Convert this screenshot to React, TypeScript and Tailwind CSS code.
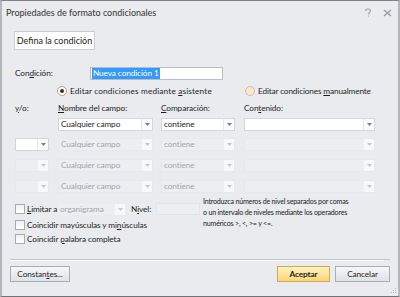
import React from "react";

const font = { fontFamily: "Lato, 'Liberation Sans', sans-serif" };

function Arrow({ disabled }: { disabled?: boolean }) {
  return (
    <div
      className={`flex h-full w-[11px] items-center justify-center border-l ${
        disabled ? "border-[#eceef1] bg-[#f7f8f9]" : "border-[#e4e6e9] bg-[#fbfbfc]"
      }`}
    >
      <svg width="5" height="3" viewBox="0 0 5 3">
        <path d="M0 0h5L2.5 3z" fill={disabled ? "#c4c7cc" : "#7a7f86"} />
      </svg>
    </div>
  );
}

function Drop({
  w,
  text,
  disabled,
}: {
  w: string;
  text?: string;
  disabled?: boolean;
}) {
  return (
    <div
      className={`flex h-[13px] items-center border ${w} ${
        disabled
          ? "border-[#e6e8eb] bg-[#eceef1] text-[#a3a6ab]"
          : "border-[#d3d6db] bg-white text-[#1e1e1e]"
      }`}
    >
      <div className="flex-1 truncate pl-[2px] leading-none">{text}</div>
      <Arrow disabled={disabled} />
    </div>
  );
}

function Check({ children }: { children: React.ReactNode }) {
  return (
    <div className="flex h-[14px] items-center gap-[2px] whitespace-nowrap">
      <div className="h-[10px] w-[10px] shrink-0 border border-[#a5abb3] bg-gradient-to-b from-[#f0f1f3] to-white" />
      <span>{children}</span>
    </div>
  );
}

function Row({ first }: { first?: boolean }) {
  return (
    <div className="flex h-[21px] items-center">
      <div className="w-[43px]">
        <div
          className={`flex h-[13px] w-[34px] items-center border ${
            first ? "border-[#d3d6db] bg-white" : "border-[#e6e8eb] bg-[#eceef1]"
          }`}
        >
          <div className="flex-1" />
          <Arrow disabled={!first} />
        </div>
      </div>
      <Drop w="w-[95px]" text="Cualquier campo" disabled />
      <div className="w-[8px]" />
      <Drop w="w-[74px]" text="contiene" disabled />
      <div className="w-[9px]" />
      <Drop w="w-[131px]" disabled />
    </div>
  );
}

export default function App() {
  return (
    <div
      style={font}
      className="relative flex h-[297px] w-[400px] flex-col whitespace-nowrap border-x-[2px] border-t border-b border-x-[#b4b7bc] border-t-[#7d8084] border-b-[#6f7378] bg-[#e9ebee] text-[8.25px] tracking-[-0.1px] text-[#1e1e1e]"
    >
      {/* title bar */}
      <div className="flex h-[23px] items-center pl-[4px] pr-[6px]">
        <span className="flex-1 text-[9px] tracking-normal text-[#333]">
          Propiedades de formato condicionales
        </span>
        <svg width="8" height="9" viewBox="0 0 8 9" className="mr-[11px]">
          <path
            d="M1.5 3C1.5 1.5 2.5 1 4 1s2.5.7 2.5 2c0 1.5-2 1.6-2 3.2M4.5 7.5v1"
            stroke="#9ba0a6"
            fill="none"
            strokeWidth="1.1"
          />
        </svg>
        <svg width="9" height="8" viewBox="0 0 9 8">
          <path
            d="M1 1l7 6M8 1L1 7"
            stroke="#9ba0a6"
            strokeWidth="1.6"
            fill="none"
          />
        </svg>
      </div>

      {/* tab */}
      <div className="mt-[7px] pl-[12px]">
        <div className="inline-flex h-[19px] w-[81px] items-center justify-center border border-[#c9ccd1] bg-white text-[9px] tracking-normal">
          Defina la condición
        </div>
      </div>

      <div className="flex flex-col pl-[13px]">
        {/* condición */}
        <div className="mt-[17px] flex h-[13px] items-center">
          <span className="w-[75px]">
            Con<u>d</u>ición:
          </span>
          <div className="flex h-[13px] w-[133px] items-center border border-[#b9bdc3] bg-white pl-[1px]">
            <span className="bg-[#3399ff] px-[1px] leading-[11px] text-white">
              Nueva condición 1
            </span>
          </div>
        </div>

        {/* radios */}
        <div className="mt-[5px] flex h-[12px] items-center pl-[42px]">
          <div className="flex h-[10px] w-[10px] items-center justify-center rounded-full border border-[#c99a78] bg-white">
            <div className="h-[4px] w-[4px] rounded-full bg-[#333]" />
          </div>
          <span className="ml-[3px] w-[175px] tracking-[0.15px]">
            Editar condiciones mediante <u>a</u>sistente
          </span>
          <div className="h-[10px] w-[10px] rounded-full border border-[#e2b798] bg-[#fbe6d6]" />
          <span className="ml-[3px] tracking-[-0.15px]">
            Editar condiciones <u>m</u>anualmente
          </span>
        </div>

        {/* headers */}
        <div className="mt-[5px] flex h-[12px] items-center">
          <span className="w-[43px]">
            <u>y</u>/o:
          </span>
          <span className="w-[103px]">
            <u>N</u>ombre del campo:
          </span>
          <span className="w-[83px]">
            <u>C</u>omparación:
          </span>
          <span>
            Con<u>t</u>enido:
          </span>
        </div>

        {/* row 1 */}
        <div className="mt-[2px] flex h-[17px] items-center">
          <div className="w-[43px]" />
          <Drop w="w-[95px]" text="Cualquier campo" />
          <div className="w-[8px]" />
          <Drop w="w-[74px]" text="contiene" />
          <div className="w-[9px]" />
          <Drop w="w-[131px]" />
        </div>
        <div className="mt-[1px]">
          <Row first />
          <Row first={false} />
          <Row first={false} />
        </div>

        {/* bottom options */}
        <div className="mt-[5px] flex">
          <div className="flex w-[188px] shrink-0 flex-col">
            <div className="flex h-[14px] items-center">
              <div className="w-[43px]">
                <Check>
                  <u>L</u>imitar a
                </Check>
              </div>
              <div className="flex h-[11px] w-[67px] items-center bg-[#eceef1] text-[#a3a6ab]">
                <span className="flex-1 pl-[2px]">organigrama</span>
                <Arrow disabled />
              </div>
              <span className="ml-[6px] w-[25px]">
                N<u>i</u>vel:
              </span>
              <div className="h-[12px] w-[44px] border border-[#e2e4e8] bg-[#eceef1]" />
            </div>
            <div className="mt-[2px]">
              <Check>
                Coincidir mayúsculas y mi<u>n</u>úsculas
              </Check>
            </div>
            <div>
              <Check>
                Coincidir <u>p</u>alabra completa
              </Check>
            </div>
          </div>
          <div className="-mt-[6px] text-[7.1px] leading-[11px] tracking-[-0.2px] text-[#222]">
            Introduzca números de nivel separados por comas
            <br />o un intervalo de niveles mediante los operadores
            <br />
            numéricos &gt;, &lt;, &gt;= y &lt;=.
          </div>
        </div>
      </div>

      {/* separator */}
      <div className="mx-[8px] mt-[13px] h-px bg-[#c3c6cb]" />
      <div className="mx-[8px] h-px w-[374px] bg-white" />

      {/* buttons */}
      <div className="mt-[5px] flex items-center px-[8px]">
        <button className="h-[16px] w-[60px] border border-[#a9aeb5] bg-gradient-to-b from-[#f6f7f8] to-[#dfe2e6] text-[8.25px]">
          Constan<u>t</u>es...
        </button>
        <div className="flex-1" />
        <button className="h-[16px] w-[53px] border border-[#d0ab4c] bg-gradient-to-b from-[#fff1c2] to-[#fcd676] text-[8.25px] font-bold">
          Aceptar
        </button>
        <button className="ml-[5px] h-[16px] w-[55px] border border-[#a9aeb5] bg-gradient-to-b from-[#f6f7f8] to-[#dfe2e6] text-[8.25px]">
          Cancelar
        </button>
      </div>

      {/* resize grip */}
      <svg
        width="7"
        height="7"
        viewBox="0 0 7 7"
        className="absolute bottom-[2px] right-[1px]"
      >
        <g fill="#b6bac0">
          <rect x="5" y="1" width="1" height="1" />
          <rect x="3" y="3" width="1" height="1" />
          <rect x="5" y="3" width="1" height="1" />
          <rect x="1" y="5" width="1" height="1" />
          <rect x="3" y="5" width="1" height="1" />
          <rect x="5" y="5" width="1" height="1" />
        </g>
      </svg>
    </div>
  );
}
